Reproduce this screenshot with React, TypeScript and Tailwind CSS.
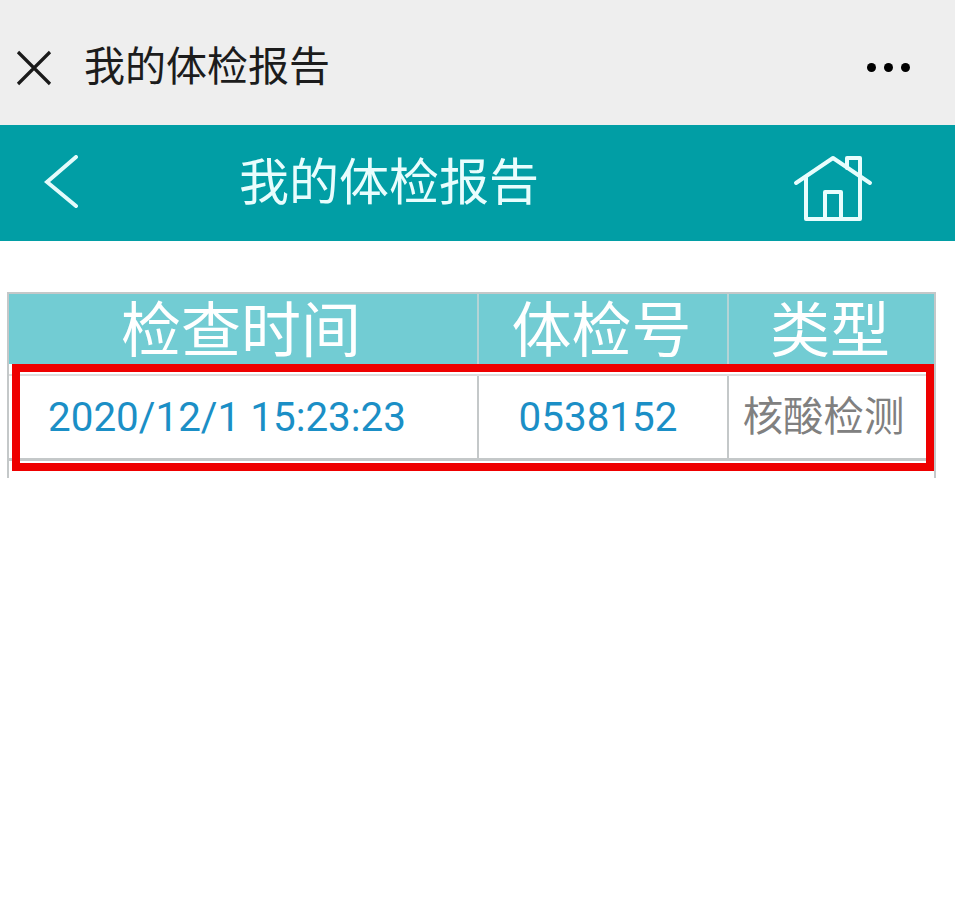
const cjk = "font-['Roboto','Noto_Sans_CJK_SC',sans-serif]";

const CloseIcon = () => (
  <svg width="36" height="36" viewBox="0 0 36 36" fill="none" stroke="#1a1a1a" strokeWidth="3.2" className="shrink-0">
    <path d="M2 2 L34 34 M34 2 L2 34" />
  </svg>
);

const BackIcon = () => (
  <svg width="36" height="56" viewBox="0 0 36 56" fill="none" stroke="#e4fbfb" strokeWidth="4" strokeLinecap="round" className="shrink-0">
    <path d="M32 2 L3 27 L32 51" />
  </svg>
);

const HomeIcon = () => (
  <svg width="80" height="68" viewBox="0 0 80 68" fill="none" stroke="#e8fdfd" strokeWidth="4" strokeLinecap="round" strokeLinejoin="round" className="shrink-0">
    <path d="M3 28 L40 3 L77 28" />
    <path d="M13 22 V64 H67 V3 H54 V13" />
    <path d="M32 64 V37 H48 V64" />
  </svg>
);

const App = () => {
  return (
    <div className={`bg-white min-h-[910px] w-[955px] ${cjk}`}>
      {/* wechat bar */}
      <div className="h-[125px] bg-[#eeeeee] flex items-center pl-[16px] pr-[45px] pt-[10px]">
        <CloseIcon />
        <span className="ml-[32px] text-[41px] leading-none text-[#1c1c1c]">我的体检报告</span>
        <div className="ml-auto flex gap-[8px]">
          <div className="w-[9px] h-[9px] rounded-full bg-black" />
          <div className="w-[9px] h-[9px] rounded-full bg-black" />
          <div className="w-[9px] h-[9px] rounded-full bg-black" />
        </div>
      </div>

      {/* page header */}
      <div className="h-[116px] bg-[#019ea5] flex items-center pl-[44px] pr-[82px]">
        <BackIcon />
        <span className="ml-[159px] text-[50px] leading-none text-[#e8fdfd]">我的体检报告</span>
        <div className="ml-auto mt-[12px]">
          <HomeIcon />
        </div>
      </div>

      {/* table */}
      <div className="relative mt-[51px] ml-[7px] w-[929px] h-[186px] border-x-2 border-t-2 border-[#c4c8c9]">
        <div className="grid grid-cols-[468px_2px_248px_2px_205px] h-[70px] bg-[#72ccd3] text-[60px] leading-none text-white text-center">
          <div className="flex items-center justify-center pt-[6px] pr-[4px]">检查时间</div>
          <div className="bg-[#b4d4d6]" />
          <div className="flex items-center justify-center pt-[6px] pr-[3px]">体检号</div>
          <div className="bg-[#b4d4d6]" />
          <div className="flex items-center justify-center pt-[6px] pr-[3px]">类型</div>
        </div>
        <div className="grid grid-cols-[468px_2px_248px_2px_205px] h-[84px] mt-[12px] border-t-0 text-[40.4px] leading-none text-center">
          <div className="flex items-center justify-center text-[#1b8fc6] pr-[32px]">2020/12/1 15:23:23</div>
          <div className="bg-[#c4c8c9]" />
          <div className="flex items-center justify-center text-[#1b8fc6] pr-[10px]">0538152</div>
          <div className="bg-[#c4c8c9]" />
          <div className="flex items-center justify-center text-[#808080] pr-[16px]">核酸检测</div>
        </div>
        {/* row rules */}
        <div className="absolute left-0 right-0 top-[80px] h-[2px] bg-[#dcdede]" />
        <div className="absolute left-0 right-0 top-[164px] h-[3px] bg-[#c4c8c9]" />
        {/* red highlight box */}
        <div className="absolute left-[3px] top-[70px] w-[922px] h-[107px] border-[8px] border-[#ee0000]" />
      </div>
    </div>
  );
};

export default App;
